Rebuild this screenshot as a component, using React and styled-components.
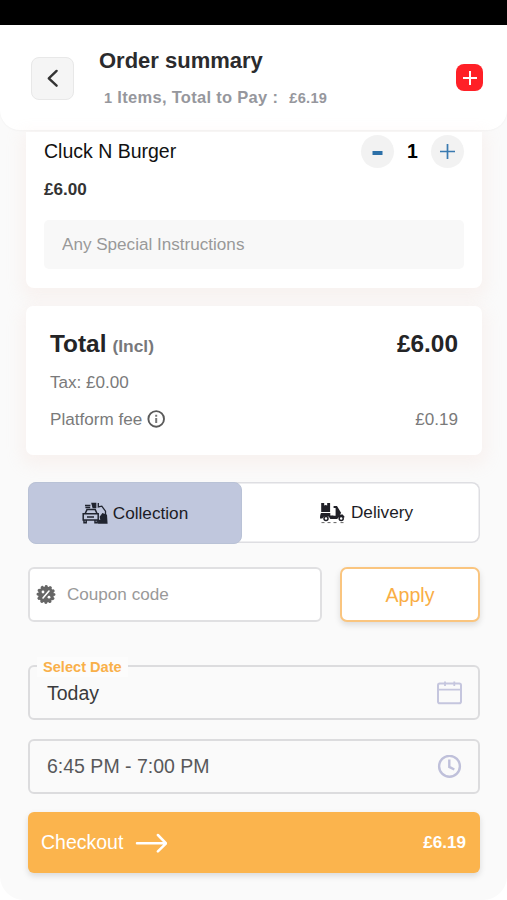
import React, { useState } from "react";
import styled, { createGlobalStyle } from "styled-components";

const GlobalStyle = createGlobalStyle`
  * {
    box-sizing: border-box;
  }
  body {
    margin: 0;
    background: #fff;
    font-family: "Liberation Sans", Arial, Helvetica, sans-serif;
  }
  button,
  input {
    margin: 0;
    font-family: inherit;
  }
  svg {
    display: block;
    flex-shrink: 0;
  }
`;

const Screen = styled.div`
  display: flex;
  flex-direction: column;
  width: 507px;
  height: 900px;
  overflow: hidden;
  background: #fafafa;
  border-radius: 0 0 24px 24px;
`;

const StatusBar = styled.div`
  height: 25px;
  flex-shrink: 0;
  background: #000;
`;

const Header = styled.header`
  display: flex;
  align-items: flex-start;
  flex-shrink: 0;
  height: 105px;
  padding: 0 24px 0 31px;
  background: #fff;
  border-radius: 0 0 20px 20px;
  box-shadow: 0 1px 2px rgba(0, 0, 0, 0.03);
`;

const BackButton = styled.button`
  display: flex;
  align-items: center;
  justify-content: center;
  width: 43px;
  height: 43px;
  margin-top: 32px;
  padding: 0;
  background: #f5f5f5;
  border: 1px solid #e8e8e8;
  border-radius: 8px;
`;

const HeaderText = styled.div`
  flex-grow: 1;
  padding: 23px 0 0 25px;
`;

const Title = styled.h1`
  margin: 0;
  font-size: 22px;
  line-height: 26px;
  color: #2b2b2d;
`;

const Subtitle = styled.div`
  display: flex;
  align-items: baseline;
  margin: 12px 0 0 5px;
  font-size: 16.5px;
  font-weight: bold;
  line-height: 22px;
  letter-spacing: 0.3px;
  white-space: pre;
  color: #96979d;
`;

const SubtitleNumber = styled.span`
  margin-left: ${({ gap }) => gap || 0}px;
  font-size: 14.6px;
`;

const AddButton = styled.button`
  display: flex;
  align-items: center;
  justify-content: center;
  width: 27px;
  height: 27px;
  margin-top: 39px;
  padding: 0;
  background: #ff2027;
  border: 0;
  border-radius: 8px;
`;

const Content = styled.main`
  display: flex;
  flex-direction: column;
  padding: 2px 27px 0 28px;
`;

const Card = styled.section`
  margin: 0 -2px 0 -2px;
  background: #fff;
  border-radius: ${({ cut }) => (cut ? "0 0 8px 8px" : "7px")};
  box-shadow: 0 6px 16px 5px rgba(240, 205, 195, 0.16);
`;

const ItemCard = styled(Card)`
  height: 156px;
  padding: 0 18px 0 18px;
`;

const TotalCard = styled(Card)`
  height: 149px;
  margin-top: 18px;
  padding: 20px 24px 0 24px;
`;

const Row = styled.div`
  display: flex;
  align-items: center;
  justify-content: space-between;
  height: ${({ height }) => height}px;
`;

const ItemName = styled.span`
  font-size: 19.5px;
  color: #111;
`;

const Stepper = styled.div`
  display: flex;
  align-items: center;
`;

const StepButton = styled.button`
  display: flex;
  align-items: center;
  justify-content: center;
  width: 33px;
  height: 33px;
  padding: 0;
  background: #f2f2f2;
  border: 0;
  border-radius: 50%;
`;

const Quantity = styled.span`
  width: 37px;
  text-align: center;
  font-size: 19.5px;
  font-weight: bold;
  color: #000;
`;

const ItemPrice = styled.div`
  margin-top: 9px;
  font-size: 17.1px;
  font-weight: bold;
  line-height: 20px;
  color: #333;
`;

const Instructions = styled.input`
  display: block;
  width: 420px;
  height: 49px;
  margin-top: 20px;
  padding: 0 18px;
  background: #f8f8f8;
  border: 0;
  border-radius: 5px;
  font-size: 17.1px;
  &::placeholder {
    color: #999;
  }
`;

const TotalLabel = styled.span`
  font-size: 24.4px;
  font-weight: bold;
  color: #242426;
`;

const Incl = styled.span`
  margin-left: 6px;
  font-size: 17.4px;
  color: #77787b;
`;

const Muted = styled.span`
  display: flex;
  align-items: center;
  gap: 5px;
  font-size: 17.1px;
  color: #7a7a7a;
`;

const Toggle = styled.div`
  display: flex;
  width: 452px;
  height: 61px;
  margin-top: 27px;
  background: #fff;
  border-radius: 8px;
  box-shadow: inset 0 0 0 1.5px #dedee2;
`;

const ToggleOption = styled.button`
  display: flex;
  align-items: center;
  justify-content: center;
  gap: 5px;
  width: ${({ active }) => (active ? 214 : 238)}px;
  height: ${({ active }) => (active ? 62 : 61)}px;
  padding: 0 0 0 ${({ active }) => (active ? 0 : 11)}px;
  background: ${({ active }) => (active ? "#c0c7dd" : "transparent")};
  border: ${({ active }) => (active ? "1px solid #b9c2d6" : "0")};
  border-radius: 8px;
  font-size: 17.2px;
  color: #1c1c26;
`;

const CouponRow = styled.div`
  display: flex;
  justify-content: space-between;
  margin-top: 24px;
`;

const CouponField = styled.label`
  display: flex;
  align-items: center;
  gap: 11px;
  width: 294px;
  height: 55px;
  padding: 1px 6px 0;
  background: #fff;
  border: 2px solid #e0e0e2;
  border-radius: 6px;
`;

const CouponInput = styled.input`
  flex-grow: 1;
  min-width: 0;
  padding: 0;
  background: none;
  border: 0;
  font-size: 17.1px;
  &::placeholder {
    color: #999;
  }
`;

const ApplyButton = styled.button`
  width: 140px;
  height: 55px;
  padding: 2px 0 0;
  background: #fff;
  border: 2px solid #fac57f;
  border-radius: 7px;
  box-shadow: 0 3px 6px rgba(0, 0, 0, 0.12);
  font-size: 19.5px;
  color: #f9ae45;
`;

const SelectField = styled.div`
  position: relative;
  display: flex;
  align-items: center;
  justify-content: space-between;
  width: 452px;
  height: 55px;
  margin-top: ${({ gap }) => gap}px;
  padding: 0 16px 0 17px;
  border: 2px solid #dcdcde;
  border-radius: 6px;
  font-size: 19.5px;
  color: ${({ dark }) => (dark ? "#3a3a3c" : "#58585a")};
`;

const FieldLabel = styled.span`
  position: absolute;
  top: -10px;
  left: 7px;
  padding: 0 6px;
  background: #fcfcfc;
  font-size: 14.6px;
  font-weight: bold;
  line-height: 20px;
  color: #f9b04a;
`;

const FieldValue = styled.span`
  padding-top: ${({ drop }) => drop || 0}px;
`;

const CheckoutButton = styled.button`
  display: flex;
  align-items: center;
  justify-content: space-between;
  width: 452px;
  height: 61px;
  margin-top: 18px;
  padding: 0 14px 0 13px;
  background: #fbb44d;
  border: 0;
  border-radius: 6px;
  box-shadow: 0 3px 6px rgba(0, 0, 0, 0.13);
  font-size: 19.5px;
  color: #fff;
`;

const CheckoutLabel = styled.span`
  display: flex;
  align-items: center;
  gap: 12px;
`;

const CheckoutPrice = styled.span`
  font-size: 17.1px;
  font-weight: bold;
`;

const BackIcon = () => (
  <svg width="20" height="20" viewBox="0 0 20 20" fill="none" stroke="#333" strokeWidth="2.4">
    <path d="M13.6 1.9 5.8 9.3l7.8 7.4" strokeLinecap="round" strokeLinejoin="round" />
  </svg>
);

const PlusIcon = ({ color, size, width }) => (
  <svg width={size} height={size} viewBox="0 0 14 14" stroke={color} strokeWidth={width}>
    <path d="M7 0v14M0 7h14" />
  </svg>
);

const MinusIcon = () => (
  <svg width="12" height="12" viewBox="0 0 12 12">
    <path d="M.5 5h10v4H.5z" fill="#2c70a8" />
  </svg>
);

const InfoIcon = () => (
  <svg width="19" height="19" viewBox="0 0 19 19" fill="none" stroke="#5a5a5a">
    <circle cx="9.2" cy="8.9" r="7.8" strokeWidth="1.9" />
    <path d="M9.2 7.9v5M9.2 4.7v2" strokeWidth="2" stroke="#777" />
  </svg>
);

const CollectionIcon = () => (
  <svg width="26" height="22" viewBox="0 0 26 22" fill="none" stroke="#20242f" strokeWidth="1.5">
    <path d="M3.2 11.5 5 7.6h8.2l1.8 3.9M1.2 11.8h15v6.3h-15zM2 18v2.7h2.2V18M13 18v2.7h2.2V18M5 15h7" />
    <path d="M3 3.4h5.4M3.4 5.4h4.8" />
    <path d="M10 1.5h3.7v4.2h-2.6zM16.3 1v4l3.5-.8 3.7 5v4.3" strokeWidth="1.3" />
    <path d="M9.8 1.6h3.6v4H11z" fill="#20242f" stroke="none" />
    <path d="m18.4 15 2.3-3 3.6 1.2.5 7.8h-8v-2.5h2.5z" fill="#20242f" />
  </svg>
);

const DeliveryIcon = () => (
  <svg width="26" height="22" viewBox="0 0 26 22" fill="#202027">
    <path d="M1.2 1h3v2.6l1.5-.7 1.5.7V1h2.9v9H1.2z" />
    <path d="M1 11h9.3v2.6h3V17h-3a4.3 4.3 0 0 0-8-.5H0c0-2.7.4-4.2 1-5.5z" />
    <path d="M13.6 4h3.4l4.2 7.1-1.5 1.5 3-.2 2 2.7-1 .7a4.2 4.2 0 0 0-6.5 1.2h-4.6v-3.2h3V6.1h-2z" />
    <circle cx="6" cy="16.5" r="2" fill="none" stroke="#202027" strokeWidth="1.5" />
    <circle cx="21.2" cy="16.5" r="2" fill="none" stroke="#202027" strokeWidth="1.5" />
    <path d="M1.5 20.6h3M7.5 20.6h3M13.5 20.6h3M20.5 20.6h3" stroke="#666" strokeWidth="1" />
  </svg>
);

const DiscountIcon = () => (
  <svg width="20" height="20" viewBox="0 0 20 20">
    <circle cx="10" cy="9.5" r="8" fill="#666" />
    <circle
      cx="10"
      cy="9.5"
      r="8"
      fill="none"
      stroke="#666"
      strokeWidth="3"
      strokeLinecap="round"
      strokeDasharray="0.1 4.0888"
    />
    <path d="m7 13 6-7" stroke="#fff" strokeWidth="1.6" strokeLinecap="round" />
    <circle cx="7" cy="7" r="1.4" fill="#fff" />
    <circle cx="13" cy="12.2" r="1.4" fill="#fff" />
  </svg>
);

const CalendarIcon = () => (
  <svg width="25" height="24" viewBox="0 0 25 24" fill="none" stroke="#c5c6de" strokeWidth="2">
    <rect x="1" y="2.6" width="23" height="19.6" rx="1.8" />
    <path d="M1 8.7h23M8 .5v4.6M17.3 .5v4.6" strokeWidth="1.8" />
  </svg>
);

const ClockIcon = () => (
  <svg width="25" height="24" viewBox="0 0 25 24" fill="none" stroke="#bfc0da" strokeWidth="2.4">
    <circle cx="12.5" cy="11.3" r="10.4" />
    <path d="M12.3 4.5v7.4l5 2.6" />
  </svg>
);

const ArrowIcon = () => (
  <svg width="32" height="20" viewBox="0 0 32 20" fill="none" stroke="#fff" strokeWidth="2.5">
    <path d="M2 10.3h29M22.9 2l8.2 8.3-8.2 8.1" strokeLinecap="round" strokeLinejoin="round" />
  </svg>
);

const App = () => {
  const [mode, setMode] = useState("collection");
  return (
    <>
      <GlobalStyle />
      <Screen>
        <StatusBar />
        <Header>
          <BackButton aria-label="Back">
            <BackIcon />
          </BackButton>
          <HeaderText>
            <Title>Order summary</Title>
            <Subtitle>
              <SubtitleNumber>1</SubtitleNumber>
              {" Items, Total to Pay :"}
              <SubtitleNumber gap={11}>£6.19</SubtitleNumber>
            </Subtitle>
          </HeaderText>
          <AddButton aria-label="Add item">
            <PlusIcon color="#fff" size={14} width={2} />
          </AddButton>
        </Header>
        <Content>
          <ItemCard cut>
            <Row height={39}>
              <ItemName>Cluck N Burger</ItemName>
              <Stepper>
                <StepButton aria-label="Decrease">
                  <MinusIcon />
                </StepButton>
                <Quantity>1</Quantity>
                <StepButton aria-label="Increase">
                  <PlusIcon color="#3a7ab0" size={15} width={1.6} />
                </StepButton>
              </Stepper>
            </Row>
            <ItemPrice>£6.00</ItemPrice>
            <Instructions placeholder="Any Special Instructions" />
          </ItemCard>
          <TotalCard>
            <Row height={36}>
              <TotalLabel>
                Total
                <Incl>(Incl)</Incl>
              </TotalLabel>
              <TotalLabel>£6.00</TotalLabel>
            </Row>
            <Row height={41}>
              <Muted>Tax: £0.00</Muted>
            </Row>
            <Row height={33}>
              <Muted>
                Platform fee
                <InfoIcon />
              </Muted>
              <Muted>£0.19</Muted>
            </Row>
          </TotalCard>
          <Toggle>
            <ToggleOption active={mode === "collection"} onClick={() => setMode("collection")}>
              <CollectionIcon />
              Collection
            </ToggleOption>
            <ToggleOption active={mode === "delivery"} onClick={() => setMode("delivery")}>
              <DeliveryIcon />
              Delivery
            </ToggleOption>
          </Toggle>
          <CouponRow>
            <CouponField>
              <DiscountIcon />
              <CouponInput placeholder="Coupon code" />
            </CouponField>
            <ApplyButton>Apply</ApplyButton>
          </CouponRow>
          <SelectField gap={43} dark>
            <FieldLabel>Select Date</FieldLabel>
            <FieldValue drop={2}>Today</FieldValue>
            <CalendarIcon />
          </SelectField>
          <SelectField gap={19}>
            <FieldValue>6:45 PM - 7:00 PM</FieldValue>
            <ClockIcon />
          </SelectField>
          <CheckoutButton>
            <CheckoutLabel>
              Checkout
              <ArrowIcon />
            </CheckoutLabel>
            <CheckoutPrice>£6.19</CheckoutPrice>
          </CheckoutButton>
        </Content>
      </Screen>
    </>
  );
};

export default App;
